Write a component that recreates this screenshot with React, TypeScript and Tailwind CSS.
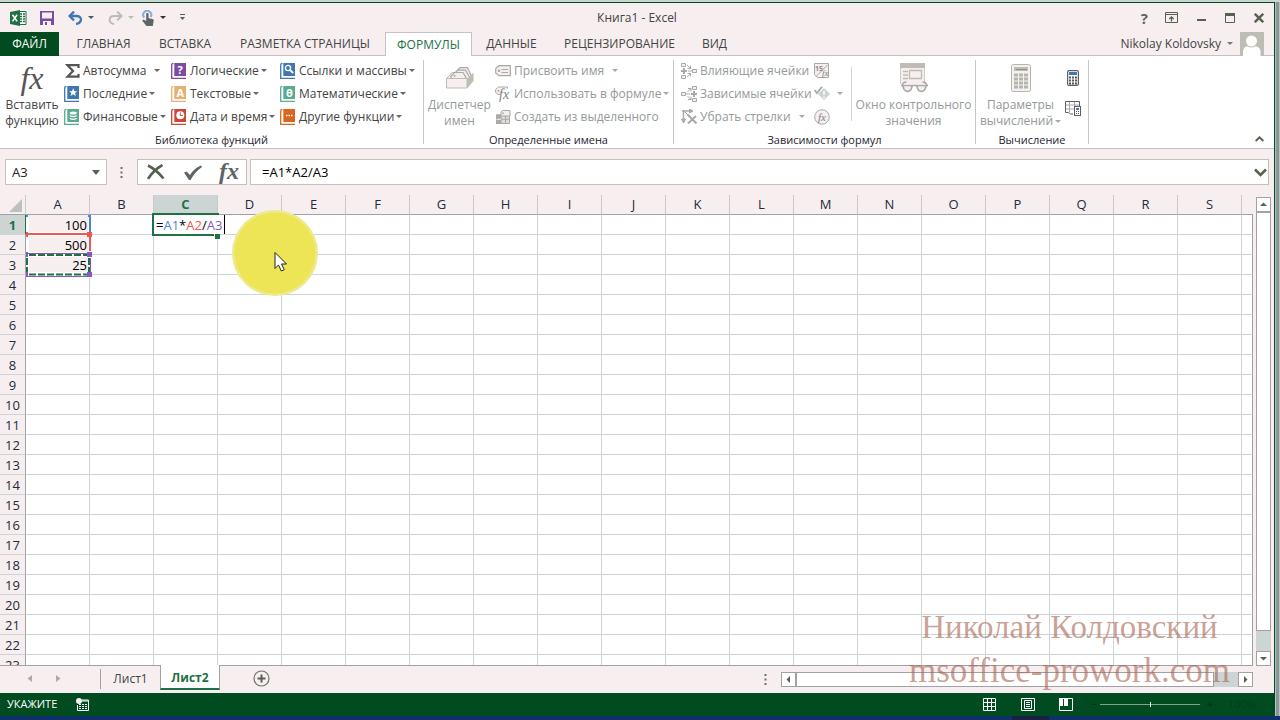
import type { ReactNode } from "react";
import { clsx } from "clsx";

const columns = "ABCDEFGHIJKLMNOPQRS".split("");
const rows = Array.from({ length: 23 }, (_, i) => i + 1);
const values: Record<string, string> = { A1: "100", A2: "500", A3: "25" };

const tabs = [
  { label: "ГЛАВНАЯ", width: "w-[83px]" },
  { label: "ВСТАВКА", width: "w-20" },
  { label: "РАЗМЕТКА СТРАНИЦЫ", width: "w-40" },
  { label: "ФОРМУЛЫ", width: "w-[87px]", active: true },
  { label: "ДАННЫЕ", width: "w-[79px]" },
  { label: "РЕЦЕНЗИРОВАНИЕ", width: "w-[137px]" },
  { label: "ВИД", width: "w-[53px]" },
];

function Arrow({ className = "text-[#777]" }: { className?: string }) {
  return (
    <svg width="6" height="3" viewBox="0 0 6 3" className={clsx("shrink-0", className)}>
      <path d="M0 0h6L3 3z" fill="currentColor" />
    </svg>
  );
}

function Book({ color, children }: { color: string; children: ReactNode }) {
  return (
    <svg width="16" height="16" viewBox="0 0 16 16" className="shrink-0">
      <path d="M2.5 0.5C1 0.5 0.7 1 0.7 2.5V15.5H15" fill="none" stroke={color} strokeWidth="1.3" />
      <path d="M3.3 0H15V13H3.3z" fill={color} />
      {children}
    </svg>
  );
}

const bookText = "font-['Open_Sans',sans-serif] text-[11px] font-bold";

function RibbonButton({ icon, label, arrow, wide, disabled }: { icon: ReactNode; label: string; arrow?: boolean; wide?: boolean; disabled?: boolean }) {
  return (
    <button className={clsx("flex h-[23px] items-center whitespace-nowrap", disabled ? "text-[#949a98]" : "text-[#444]")}>
      <span className="mr-[3px] flex w-4 shrink-0 justify-center">{icon}</span>
      {label}
      {arrow && (
        <span className={wide ? "ml-2" : "ml-0.5"}>
          <Arrow className={disabled ? "text-[#aaa]" : "text-[#666]"} />
        </span>
      )}
    </button>
  );
}

function BigButton({ icon, lines, arrow, disabled, width }: { icon: ReactNode; lines: string[]; arrow?: boolean; disabled?: boolean; width: string }) {
  return (
    <button className={clsx("flex h-[70px] shrink-0 flex-col items-center whitespace-nowrap leading-4", width, disabled ? "text-[#949a98]" : "text-[#444]")}>
      <span className="flex h-[38px] items-center">{icon}</span>
      <span>{lines[0]}</span>
      <span className="flex items-center gap-0.5">
        {lines[1]}
        {arrow && <Arrow className="text-[#aaa]" />}
      </span>
    </button>
  );
}

function Group({ title, width, children }: { title: string; width: string; children: ReactNode }) {
  return (
    <section className={clsx("mb-1 mt-1 flex shrink-0 flex-col border-r border-[#c6c6c6]", width)}>
      <div className="-mt-px flex h-[70px]">{children}</div>
      <h2 className="mt-[3px] text-center text-[11px] font-medium leading-4 text-[#1f2430]">{title}</h2>
    </section>
  );
}

function TitleBar() {
  return (
    <header className="flex h-[29px] shrink-0 items-center">
      <div className="flex flex-1 items-center pl-2.5">
        <svg width="17" height="16" viewBox="0 0 17 16">
          <path d="M9 1.5h7v13H9" fill="#fff" stroke="#1e7145" />
          <path d="M10 4h2M13 4h2M10 6.5h2M13 6.5h2M10 9h2M13 9h2M10 11.5h2M13 11.5h2" stroke="#1e7145" strokeWidth="1.4" />
          <path d="M0 2l10-2v16L0 14z" fill="#1e7145" />
          <path d="M2.5 4.8l4.6 6.6M7.1 4.8l-4.6 6.6" stroke="#fff" strokeWidth="1.6" />
        </svg>
        <button aria-label="Сохранить" className="ml-[13px]">
          <svg width="14" height="14" viewBox="0 0 14 14">
            <path d="M0 0h14v14H0z" fill="#7b4da0" />
            <path d="M2 1.5h10v6H2zM3 10h8v4H3z" fill="#f6eeef" />
            <path d="M5 11h2v3H5z" fill="#7b4da0" />
          </svg>
        </button>
        <button aria-label="Отменить" className="ml-[14px] flex items-center gap-[5px]">
          <svg width="15" height="14" viewBox="0 0 15 14">
            <path d="M1.5 5H8.5c6 0 6 6.500-0.500 8" fill="none" stroke="#3f78b5" strokeWidth="2.4" />
            <path d="M6 0.600L1.600 5 6 9.400" fill="none" stroke="#3f78b5" strokeWidth="2.4" />
          </svg>
          <Arrow className="text-[#555]" />
        </button>
        <button aria-label="Вернуть" className="ml-[14px] flex items-center gap-[5px]">
          <svg width="15" height="14" viewBox="0 0 15 14">
            <path d="M13.5 5H6C0.500 5 0 12 6 13" fill="none" stroke="#bbb" strokeWidth="2" />
            <path d="M9.2 0.600L13.500 5 9.200 9.200" fill="none" stroke="#bbb" strokeWidth="2" />
          </svg>
          <Arrow className="text-[#bbb]" />
        </button>
        <button aria-label="Режим сенсорного управления" className="ml-[8px] flex items-center gap-[6px]">
          <svg width="12" height="16" viewBox="0 0 12 16">
            <path d="M2.2 7.500A4 4 0 1 1 8.600 7" fill="none" stroke="#7fb0dd" strokeWidth="2" />
            <path d="M4.200 4c0-1.400 2.300-1.400 2.300 0v4l4.500 1.200c.8.300.8 1 .6 2L10.800 16H4.500L0.500 11c-.4-1 1-1.600 1.800-1L4.200 11z" fill="#5d6468" />
          </svg>
          <Arrow className="text-[#333]" />
        </button>
        <button aria-label="Настройка панели" className="ml-[14px] text-[#56614f]">
          <svg width="5" height="7" viewBox="0 0 5 7">
            <path d="M0 0.500h5" stroke="currentColor" />
            <path d="M0 3h5L2.500 6z" fill="currentColor" />
          </svg>
        </button>
      </div>
      <h1 className="text-[#444]">Книга1 - Excel</h1>
      <div className="flex flex-1 items-center justify-end gap-[15px] pr-2.5 text-[#56614f]">
        <button aria-label="Справка" className="mr-0.5 text-[15px] font-bold leading-4 text-[#5d6468]">?</button>
        <button aria-label="Параметры отображения ленты">
          <svg width="13" height="11" viewBox="0 0 13 11">
            <path d="M0.500 0.500h12v10H0.500zM0.500 2.500h12" fill="none" stroke="currentColor" />
            <path d="M6.500 9.500V5M4.300 7l2.200-2.200L8.700 7" fill="none" stroke="currentColor" strokeWidth="1.300" />
          </svg>
        </button>
        <button aria-label="Свернуть" className="ml-1">
          <svg width="9" height="12" viewBox="0 0 9 12"><path d="M0 8h9" stroke="currentColor" strokeWidth="2" /></svg>
        </button>
        <button aria-label="Развернуть" className="ml-1">
          <svg width="10" height="10" viewBox="0 0 10 10">
            <path d="M0.500 0.500h9v9h-9z" fill="none" stroke="currentColor" />
            <path d="M0 0h10v3H0z" fill="currentColor" />
          </svg>
        </button>
        <button aria-label="Закрыть" className="ml-1">
          <svg width="10" height="10" viewBox="0 0 10 10"><path d="M0.800 0.800l8.400 8.400M9.200 0.800L0.800 9.200" stroke="currentColor" strokeWidth="2.400" /></svg>
        </button>
      </div>
    </header>
  );
}

function TabBar() {
  return (
    <nav className="flex h-6 shrink-0">
      <button className="w-[59px] bg-[#004b20] text-white">ФАЙЛ</button>
      <div className="w-[3px] border-b border-[#c3c3c5]" />
      {tabs.map((tab) => (
        <button
          key={tab.label}
          className={clsx(
            "shrink-0 whitespace-nowrap",
            tab.width,
            tab.active ? "border border-b-0 border-[#c3c3c5] bg-white text-[#1e7145]" : "border-b border-[#c3c3c5] text-[#444]",
          )}
        >
          {tab.label}
        </button>
      ))}
      <div className="flex flex-1 items-center justify-end border-b border-[#c3c3c5] pr-2.5 text-[#444]">
        <button className="flex items-center gap-1.5">
          Nikolay Koldovsky
          <Arrow />
        </button>
        <svg width="24" height="24" viewBox="0 0 24 24" className="ml-[7px]">
          <path d="M0 0h24v24H0z" fill="#bdbdb5" />
          <circle cx="11.500" cy="9" r="5.500" fill="#fff" />
          <path d="M3 24v-4.500c0-3 2-5 4.500-5.200 2.500 1.600 5.500 1.600 8 0 2.500.2 5 2.200 5 5.200V24z" fill="#fff" />
        </svg>
      </div>
    </nav>
  );
}

const grey = "#a9aaa8";

function Ribbon() {
  return (
    <div className="flex h-[93px] shrink-0 border-b border-[#c3c3c5] bg-white">
      <Group title="Библиотека функций" width="w-[424px]">
        <BigButton
          width="w-16"
          icon={<span className="font-['Liberation_Serif',serif] text-[32px] italic leading-8 text-[#555]">fx</span>}
          lines={["Вставить", "функцию"]}
        />
        <div className="w-[107px]">
          <RibbonButton
            icon={
              <svg width="15" height="14" viewBox="0 0 15 14">
                <path d="M13.500 4V1.200H2.500L8 7l-5.500 5.700h11V10" fill="none" stroke="#555" strokeWidth="2.200" />
              </svg>
            }
            label="Автосумма"
            arrow
            wide
          />
          <RibbonButton icon={<Book color="#3f78b0"><path d="M9.200 2.200l1.200 3h3l-2.400 1.900.9 3-2.700-1.800-2.700 1.800.9-3L5 5.200h3z" fill="#fff" /></Book>} label="Последние" arrow />
          <RibbonButton
            icon={
              <Book color="#5bab91">
                <ellipse cx="9.200" cy="4" rx="3.500" ry="1.500" fill="#fff" />
                <path d="M5.700 6q3.500 2 7 0v1.300q-3.500 2-7 0zM5.700 8.800q3.500 2 7 0v1.300q-3.500 2-7 0z" fill="#fff" />
              </Book>
            }
            label="Финансовые"
            arrow
          />
        </div>
        <div className="w-[109px]">
          <RibbonButton icon={<Book color="#7b4da0"><text x="6.500" y="10.500" fill="#fff" className={bookText}>?</text></Book>} label="Логические" arrow />
          <RibbonButton icon={<Book color="#e6b071"><text x="5.500" y="10.500" fill="#fff" className={bookText}>A</text></Book>} label="Текстовые" arrow />
          <RibbonButton
            icon={
              <Book color="#cb4636">
                <circle cx="9.300" cy="6.300" r="4" fill="#fff" />
                <path d="M9.300 3.500v3h2.500" fill="none" stroke="#cb4636" />
              </Book>
            }
            label="Дата и время"
            arrow
          />
        </div>
        <div>
          <RibbonButton
            icon={
              <Book color="#3f78b0">
                <circle cx="8" cy="5" r="2.600" fill="none" stroke="#fff" strokeWidth="1.300" />
                <path d="M10 7l3.200 3.200" stroke="#fff" strokeWidth="1.800" />
              </Book>
            }
            label="Ссылки и массивы"
            arrow
          />
          <RibbonButton icon={<Book color="#5bab91"><text x="6" y="10.500" fill="#fff" className={bookText}>θ</text></Book>} label="Математические" arrow />
          <RibbonButton icon={<Book color="#d9661f"><path d="M6 6.500h1.500M8.500 6.500H10M11 6.500h1.500" stroke="#fff" strokeWidth="1.400" /></Book>} label="Другие функции" arrow />
        </div>
      </Group>

      <Group title="Определенные имена" width="w-[250px]">
        <BigButton
          width="w-[71px]"
          disabled
          icon={
            <svg width="28" height="22" viewBox="0 0 28 22">
              <path d="M0.500 11.500L6 5.500h16l5 5-6 2z" fill="#f1ebec" stroke="#bdbdb5" />
              <path d="M11 4l3-3.300h7.500L25.500 9M8.500 6.500l3-3.300h8L23.500 10" fill="#f6eeef" stroke={grey} strokeWidth="1.200" />
              <path d="M5 11.500V9l3.500-3.500h8.500l3.500 6z" fill="#f6eeef" stroke={grey} strokeWidth="1.200" />
              <circle cx="8.500" cy="8.700" r="1" fill={grey} />
              <path d="M21 12l6.500-6.500V14L21 21.500z" fill="#bdbdb5" />
              <path d="M0.500 11.500h20.500v9.500H0.500z" fill="#f6eeef" stroke="#bdbdb5" />
            </svg>
          }
          lines={["Диспетчер", "имен"]}
        />
        <div>
          <RibbonButton
            disabled
            arrow
            wide
            icon={
              <svg width="16" height="12" viewBox="0 0 16 12">
                <path d="M4 0.700h11.300v10H4L0.700 8V3.500z" fill="#f6eeef" stroke={grey} strokeWidth="1.200" />
                <circle cx="4" cy="5.800" r="1.200" fill={grey} />
                <path d="M6.500 4.500H13M6.500 7.500H13" stroke={grey} strokeWidth="1.200" />
              </svg>
            }
            label="Присвоить имя"
          />
          <RibbonButton
            disabled
            arrow
            icon={
              <svg width="16" height="16" viewBox="0 0 16 16">
                <path d="M12.500 2.500V1H3.500L0.600 3.500v3L3 8.500h2" fill="#f6eeef" stroke={grey} />
                <circle cx="3.500" cy="4.800" r="1" fill={grey} />
                <text x="4" y="12.500" fill="#7d8381" className="font-['Liberation_Serif',serif] text-[14px] italic">fx</text>
              </svg>
            }
            label="Использовать в формуле"
          />
          <RibbonButton
            disabled
            icon={
              <svg width="15" height="14" viewBox="0 0 15 14">
                <path d="M0.500 5h13v8.500h-13z" fill="#dedbd9" stroke={grey} />
                <path d="M0 5h5v9H0zM5 9.300h9M9.500 6v8" fill={grey} stroke={grey} />
                <path d="M0.500 9.300H5" stroke="#f6eeef" />
                <path d="M6.500 0.500h7.500v5.500H5V2z" fill="#f6eeef" stroke={grey} />
                <circle cx="7" cy="3.200" r="0.900" fill={grey} />
              </svg>
            }
            label="Создать из выделенного"
          />
        </div>
      </Group>

      <Group title="Зависимости формул" width="w-[302px]">
        <div className="w-[140px] pl-[7px]">
          <RibbonButton
            disabled
            icon={
              <svg width="16" height="16" viewBox="0 0 16 16" fill="none" stroke={grey}>
                <path d="M0.500 0.500h4v3h-4zM0.500 12.500h4v3h-4zM11.500 6.500h4v3h-4z" fill="#f6eeef" />
                <path d="M0 8h6M3 5v6" strokeWidth="2" />
                <path d="M6 2l3.500 3.500M9.500 2.500v3h-3M6 14l3.500-3.500M6.500 10.500h3v3M7 8h4" />
              </svg>
            }
            label="Влияющие ячейки"
          />
          <RibbonButton
            disabled
            icon={
              <svg width="16" height="16" viewBox="0 0 16 16" fill="none" stroke={grey}>
                <path d="M11.500 0.500h4v3h-4zM11.500 12.500h4v3h-4zM0.500 6.500h4v3h-4z" fill="#f6eeef" />
                <path d="M10 8h6M13 5v6" strokeWidth="2" />
                <path d="M6.500 6L10 2.500M7 2.500h3v3M6.500 10l3.500 3.500M10 10.500v3H7M5 8h4" />
              </svg>
            }
            label="Зависимые ячейки"
          />
          <RibbonButton
            disabled
            arrow
            wide
            icon={
              <svg width="16" height="15" viewBox="0 0 16 15" fill="none" stroke={grey}>
                <path d="M1 2h10M2.500 1v12" strokeWidth="1.500" />
                <path d="M8.500 0v4l3.500-2zM0.500 10l2 4 2-4z" fill={grey} />
                <path d="M3 2l5 5" />
                <path d="M6.500 5.500l9 9M15 7l-8 7.500" strokeWidth="2" />
              </svg>
            }
            label="Убрать стрелки"
          />
        </div>
        <div className="w-[37px] text-[#949a98]">
          <button aria-label="Показать формулы" className="flex h-[23px] items-center">
            <svg width="16" height="16" viewBox="0 0 16 16">
              <path d="M0.500 0.500h14v14h-11l-3-3z" fill="#f6eeef" stroke={grey} />
              <path d="M2 13.500L14 1.500" stroke={grey} />
              <text x="1" y="7.500" fill="#8a8f8d" className="font-['Open_Sans',sans-serif] text-[7px] font-bold">15</text>
              <text x="8" y="13" fill="#7d8381" className="font-['Liberation_Serif',serif] text-[9px] italic">fx</text>
            </svg>
          </button>
          <button aria-label="Проверка наличия ошибок" className="flex h-[23px] items-center gap-[7px]">
            <svg width="16" height="15" viewBox="0 0 16 15">
              <path d="M10 2l6 6-6 6-6-6z" fill="#cdd3d1" />
              <path d="M10 5v4M10 10.500v1.500" stroke="#fff" strokeWidth="1.500" />
              <path d="M0.500 4l2.500 3L8 0.800" fill="none" stroke={grey} strokeWidth="1.800" />
            </svg>
            <Arrow className="text-[#aaa]" />
          </button>
          <button aria-label="Вычислить формулу" className="flex h-[23px] items-center">
            <svg width="16" height="16" viewBox="0 0 16 16">
              <circle cx="8" cy="8" r="7.300" fill="#f6eeef" stroke={grey} />
              <text x="4" y="11.500" fill="#7d8381" className="font-['Liberation_Serif',serif] text-[11px] italic">fx</text>
            </svg>
          </button>
        </div>
        <div className="my-2 border-l border-[#d5d5d5]" />
        <BigButton
          width="w-[123px]"
          disabled
          icon={
            <svg width="28" height="30" viewBox="0 0 28 30">
              <path d="M0.500 0.500h24v21h-24z" fill="#f6eeef" stroke="#cfcdc8" />
              <path d="M0 0h25v5H0z" fill="#bdbdb5" />
              <path d="M3 8.500h5M3 12h5M3 15.500h5M9.500 7.500h12v8h-12z" fill="none" stroke="#bdbdb5" strokeWidth="1.300" />
              <path d="M0 21h26v2H0z" fill="#fff" />
              <path d="M2 22.500q1-3.500 4.500-3.500M27 22.500q-1-3.500-4.500-3.500" fill="none" stroke={grey} strokeWidth="1.500" />
              <path d="M3 22.500h9c0 8-8.500 7.500-9 0zM17 22.500h9c-.5 7.500-9 8-9 0z" fill="#f6eeef" stroke={grey} strokeWidth="1.700" />
              <path d="M12 23q2.500-1.500 5 0M1 22.500h2M26 22.500h2" fill="none" stroke={grey} strokeWidth="1.700" />
            </svg>
          }
          lines={["Окно контрольного", "значения"]}
        />
      </Group>

      <Group title="Вычисление" width="w-[113px]">
        <BigButton
          width="w-[89px]"
          disabled
          arrow
          icon={
            <svg width="20" height="28" viewBox="0 0 20 28">
              <rect x="0.500" y="0.500" width="19" height="27" rx="2" fill="#f6f1f1" stroke="#b5b5ae" />
              <path d="M3 3h14v4H3z" fill="#bdbdb5" />
              <path d="M5 5.500h11" stroke="#8f918c" />
              <path d="M3 11h14M3 15h14M3 19h14M3 23h14" stroke="#b5b5ae" strokeWidth="3" strokeDasharray="4 1" />
            </svg>
          }
          lines={["Параметры", "вычислений"]}
        />
        <div className="flex flex-col gap-[15px] pt-[11px]">
          <button aria-label="Пересчет" className="pl-0.5">
            <svg width="12" height="16" viewBox="0 0 12 16">
              <rect x="0.600" y="0.600" width="10.800" height="14.800" rx="1.500" fill="#fff" stroke="#5b6068" strokeWidth="1.200" />
              <path d="M2 2h8v3H2z" fill="#3f78b0" />
              <path d="M2 7.500h8M2 10.500h8M2 13.500h8" stroke="#555" strokeWidth="2" strokeDasharray="2 1" />
            </svg>
          </button>
          <button aria-label="Произвести вычисления">
            <svg width="16" height="15" viewBox="0 0 16 15">
              <path d="M4.500 0.500V11M9.500 0.500V5M0.500 4h14M0.500 8H9" fill="none" stroke="#aaa8a0" />
              <path d="M0.500 11.500v-11h14V5M0.500 11.500h3l2 1.500h2.500" fill="none" stroke="#5b6068" />
              <rect x="9.500" y="5.500" width="6" height="9" fill="#fff" stroke="#5b6068" />
              <path d="M11 8h3" stroke="#3f78b0" strokeWidth="2" />
              <path d="M11 10.500h3M11 12.500h3" stroke="#555" strokeDasharray="1 1" />
            </svg>
          </button>
        </div>
      </Group>
      <div className="flex flex-1 items-end justify-end pb-[5px] pr-2.5">
        <button aria-label="Свернуть ленту" className="pb-px">
          <svg width="9" height="6" viewBox="0 0 9 6" className="block"><path d="M0.700 5l3.800-3.700L8.300 5" fill="none" stroke="#56614f" strokeWidth="1.900" /></svg>
        </button>
      </div>
    </div>
  );
}

function FormulaBar() {
  return (
    <div className="flex h-[46px] shrink-0 items-center pl-[5px] pr-[5px] text-[13px] text-[#222]">
      <div className="flex h-[26px] w-[102px] items-center border border-[#c3c1ba] bg-white pr-1.5">
        <input aria-label="Имя" defaultValue="A3" className="w-0 flex-1 pl-1.5 pt-px outline-none" />
        <svg width="8" height="5" viewBox="0 0 8 5"><path d="M0 0h8L4 5z" fill="#56614f" /></svg>
      </div>
      <svg width="3" height="11" viewBox="0 0 3 11" className="ml-[13px] mr-[14px]">
        <path d="M0.500 0h2v2h-2zM0.500 4.500h2v2h-2zM0.500 9h2v2h-2z" fill="#6b7368" />
      </svg>
      <div className="flex h-[26px] w-[110px] items-center border border-[#c3c1ba] bg-white pl-[9px]">
        <button aria-label="Отмена">
          <svg width="18" height="16" viewBox="0 0 18 16">
            <path d="M1 1.500C6 4 12 9 16.500 14.500M15.500 1C10 4 4.500 9.500 1 14.800" fill="none" stroke="#56614f" strokeWidth="2.600" />
          </svg>
        </button>
        <button aria-label="Ввод" className="ml-[18px]">
          <svg width="19" height="15" viewBox="0 0 19 15"><path d="M1 7.500l2.500-1 3.500 3.500C9.500 6 13 2.500 18 0.500l1 1.500C14 5.500 10.500 9.500 7.500 15H6z" fill="#5d6468" /></svg>
        </button>
        <button aria-label="Вставить функцию" className="ml-[17px] pb-0.5 font-['Liberation_Serif',serif] text-[24px] font-bold italic leading-5 text-[#5d6468]">fx</button>
      </div>
      <div className="ml-[3px] flex h-[26px] flex-1 items-center border border-[#c3c1ba] bg-white pr-px">
        <input aria-label="Строка формул" defaultValue="=A1*A2/A3" className="w-0 flex-1 pl-[11px] pt-px text-black outline-none" />
        <button aria-label="Развернуть строку формул">
          <svg width="13" height="9" viewBox="0 0 13 9"><path d="M1 1.500l5.500 5.500L12 1.500" fill="none" stroke="#56614f" strokeWidth="2.600" /></svg>
        </button>
      </div>
    </div>
  );
}

function ScrollButton({ label, d }: { label: string; d: string }) {
  return (
    <button aria-label={label} className="flex size-[15px] shrink-0 items-center justify-center border border-[#a2a1a6] bg-white">
      <svg width="7" height="7" viewBox="0 0 7 7"><path d={d} fill="#56614f" /></svg>
    </button>
  );
}

function Sheet() {
  return (
    <div className="flex min-h-0 flex-1 pr-[3px]">
      <div className="relative flex-1 overflow-hidden border-b border-[#a2a1a6]">
        <table className="w-full table-fixed border-separate border-spacing-0 text-[13px] leading-4">
          <colgroup>
            <col className="w-[26px]" />
            {columns.map((c) => (
              <col key={c} className="w-16" />
            ))}
            <col />
          </colgroup>
          <thead>
            <tr className="h-5">
              <th className="border-b border-r border-b-[#a2a1a6] border-r-[#c9c8ca] p-0">
                <svg width="13" height="13" viewBox="0 0 13 13" className="ml-auto mr-[3px] mt-0.5"><path d="M13 0v13H0z" fill="#bfbfbd" /></svg>
              </th>
              {columns.map((c) => (
                <th
                  key={c}
                  className={clsx(
                    "border-b border-r border-b-[#a2a1a6] border-r-[#c9c8ca] p-0 pb-0.5 leading-4",
                    c === "C" ? "bg-[#cdd5d4] font-bold text-[#1e7145]" : "font-normal text-[#222b3a]",
                  )}
                >
                  {c}
                </th>
              ))}
              <th className="border-b border-[#a2a1a6] p-0" />
            </tr>
          </thead>
          <tbody>
            {rows.map((r) => (
              <tr key={r} className="h-5">
                <th
                  className={clsx(
                    "border-b border-r border-b-[#cdd5d4] p-0",
                    r === 1 ? "border-r-[#1e7145] bg-[#cdd5d4] font-bold text-[#1e7145]" : "border-r-[#a2a1a6] font-normal text-[#222b3a]",
                  )}
                >
                  {r}
                </th>
                {columns.map((c) => (
                  <td
                    key={c}
                    className={clsx(
                      "border-b border-r border-[#cdd5d4] p-0 pr-0.5 text-right text-black",
                      values[c + r] ? "bg-[#f6eeef]" : "bg-white",
                    )}
                  >
                    {values[c + r]}
                  </td>
                ))}
                <td className="border-b border-r border-b-[#cdd5d4] border-r-[#a2a1a6] bg-white p-0" />
              </tr>
            ))}
          </tbody>
        </table>

        {/* highlighted ranges of the formula being edited */}
        <svg width="94" height="84" viewBox="0 0 94 84" className="absolute left-0 top-0">
          <path d="M26 20h3v64h-3zM88 20h4v63h-4zM28 37h60v4H28zM28 57h60v5H28zM28 77h60v5H28z" fill="#fff" />
          <path d="M90 22h1v15h-1zM89 22h1v15h-1zM26 20h2v2h-2zM88 20h3v2h-3z" fill="#4a86d8" />
          <path d="M28 38h60v2H28zM89 42h2v14h-2zM26 37h2v5h-2zM87 37h5v5h-5z" fill="#f0584f" />
          <path d="M28 58h60v1H28zM28 81h60v1H28zM90 63h1v14h-1zM26 57h2v5h-2zM87 57h5v5h-5zM26 77h2v5h-2zM87 77h5v5h-5z" fill="#8a56c4" />
          <path d="M29 60h58M29 79.500h58M89 63v14M27 63v14" fill="none" stroke="#1e7145" strokeWidth="2" strokeDasharray="7 2" />
        </svg>

        <div className="absolute left-[152px] top-[18px] h-[23px] w-[67px] border-2 border-r-0 border-[#1e7145]">
          <div className="flex h-[19px] w-[71px] items-center whitespace-nowrap border-r border-black bg-white pl-0.5 text-[13px] leading-4">
            <span>=</span>
            <span className="text-[#4a86d8]">A1</span>
            <span>*</span>
            <span className="text-[#f0584f]">A2</span>
            <span>/</span>
            <span className="text-[#8a56c4]">A3</span>
          </div>
        </div>
        <div className="absolute left-[214px] top-[38px] size-[6px] border-l border-t border-white bg-[#1e7145]" />

        <svg width="88" height="88" viewBox="0 0 88 88" className="absolute left-[231px] top-[14px]">
          <circle cx="44" cy="44" r="43" fill="#ece98f" />
          <circle cx="44" cy="44" r="40.500" fill="#ede556" />
          <path d="M44 43.500v16l3.500-3.500 2.800 6 3-1.300-2.800-5.700h5z" fill="#fff" stroke="#222" />
        </svg>
      </div>

      <div className="ml-[3px] mt-0.5 flex w-[15px] flex-col bg-[#cdd5d4]">
        <ScrollButton label="Вверх" d="M0 5h7L3.500 1.500z" />
        <div className="flex-1 border border-[#a2a1a6] bg-white" />
        <div className="h-5" />
        <ScrollButton label="Вниз" d="M0 2h7L3.500 5.500z" />
      </div>
    </div>
  );
}

function SheetTabs() {
  return (
    <div className="flex h-[27px] shrink-0 items-start pr-[21px]">
      <div className="flex h-6 w-[100px] items-center gap-6 pl-[27px] text-[#aaa]">
        <button aria-label="Предыдущий лист"><svg width="5" height="7" viewBox="0 0 5 7"><path d="M5 0v7L0.500 3.500z" fill="currentColor" /></svg></button>
        <button aria-label="Следующий лист"><svg width="5" height="7" viewBox="0 0 5 7"><path d="M0 0v7l4.500-3.500z" fill="currentColor" /></svg></button>
      </div>
      <button className="mt-[3px] h-5 w-[60px] border-l border-[#a2a1a6] text-[#444]">Лист1</button>
      <button className="z-10 -mt-px h-[25px] w-[60px] border-x border-b-2 border-x-[#a2a1a6] border-b-[#1e7145] bg-white pt-0.5 font-bold text-[#1e7145]">Лист2</button>
      <button aria-label="Новый лист" className="ml-[33px] mt-1">
        <svg width="17" height="17" viewBox="0 0 17 17">
          <circle cx="8.500" cy="8.500" r="7.500" fill="none" stroke="#6d7370" strokeWidth="1.200" />
          <path d="M8.500 4.500v8M4.500 8.500h8" stroke="#56614f" strokeWidth="2" />
        </svg>
      </button>
      <div className="flex-1" />
      <svg width="3" height="11" viewBox="0 0 3 11" className="mr-3.5 mt-2"><path d="M0.500 0h2v2h-2zM0.500 4.500h2v2h-2zM0.500 9h2v2h-2z" fill="#6b7368" /></svg>
      <div className="mt-1.5 flex h-[15px] w-[472px] bg-[#cdd5d4]">
        <ScrollButton label="Влево" d="M5 0v7L1.500 3.500z" />
        <div className="flex-1 border border-[#a2a1a6] bg-white" />
        <div className="w-6" />
        <ScrollButton label="Вправо" d="M2 0v7l3.500-3.500z" />
      </div>
    </div>
  );
}

function StatusBar() {
  return (
    <footer className="flex h-[23px] shrink-0 items-center bg-[#004b20] pl-[7px] text-[11px] text-white">
      <span className="w-[69px]">УКАЖИТЕ</span>
      <button aria-label="Запись макроса">
        <svg width="13" height="13" viewBox="0 0 13 13">
          <path d="M6 2h6.500v10.500h-11V7" fill="none" stroke="#fff" />
          <path d="M6 3h6" stroke="#fff" />
          <path d="M3 6.500h9M3 8.500h9M3 10.500h9" stroke="#fff" strokeDasharray="2 1" />
          <circle cx="3" cy="3" r="3" fill="#f6eeef" />
        </svg>
      </button>
      <div className="flex-1" />
      <button aria-label="Обычный">
        <svg width="13" height="13" viewBox="0 0 13 13"><path d="M0.500 0.500h12v12H0.500zM4.500 0v13M8.500 0v13M0 4.500h13M0 8.500h13" fill="none" stroke="#fff" /></svg>
      </button>
      <button aria-label="Разметка страницы" className="ml-[25px]">
        <svg width="14" height="13" viewBox="0 0 14 13"><path d="M0.500 0.500h13v12H0.500zM3.500 2.500h7v8h-7zM5 4.500h4M5 6.500h4M5 8.500h4" fill="none" stroke="#fff" /></svg>
      </button>
      <button aria-label="Страничный режим" className="ml-6">
        <svg width="14" height="13" viewBox="0 0 14 13">
          <path d="M0.500 0.500h13v12H0.500z" fill="none" stroke="#fff" />
          <path d="M0 0h4v8H0zM5 0h4v8H5z" fill="#fff" />
        </svg>
      </button>
      <button aria-label="Уменьшить" className="ml-[15px] w-3 font-bold text-[#003817]">−</button>
      <input
        type="range"
        aria-label="Масштаб"
        className="h-3 w-[100px] appearance-none bg-linear-to-b from-transparent from-[5px] via-white via-[5px] to-transparent to-[6px] [&::-webkit-slider-thumb]:h-[5px] [&::-webkit-slider-thumb]:w-px [&::-webkit-slider-thumb]:appearance-none [&::-webkit-slider-thumb]:bg-white"
      />
      <button aria-label="Увеличить" className="ml-1 w-3 font-bold text-[#003817]">+</button>
      <span className="ml-3 w-[46px] text-[#003f1a]">100%</span>
    </footer>
  );
}

export default function App() {
  return (
    <div className="relative flex h-screen flex-col overflow-hidden bg-[#cdd5d4] pt-0.5 font-['Open_Sans','Noto_Sans',sans-serif] text-[12px]">
      <div className="flex min-h-0 flex-1 bg-[#8b9594]">
        <main className="flex min-w-0 flex-1 flex-col border-r border-t border-[#004b20] bg-[#f6eeef]">
          <TitleBar />
          <TabBar />
          <Ribbon />
          <FormulaBar />
          <Sheet />
          <SheetTabs />
          <StatusBar />
        </main>
        <div className="w-[5px] border-x border-[#b9c2c3]" />
      </div>
      <div className="flex h-1 shrink-0 justify-center bg-[#10306b]">
        <div className="ml-[61%] w-[37px] bg-[#1a1f45]" />
      </div>
      <div className="pointer-events-none absolute bottom-7 right-[50px] text-center font-['Liberation_Serif',serif] text-[#a8614f]/60">
        <p className="text-[33px] leading-[43px]">Николай Колдовский</p>
        <p className="text-[35px] leading-[43px]">msoffice-prowork.com</p>
      </div>
    </div>
  );
}
